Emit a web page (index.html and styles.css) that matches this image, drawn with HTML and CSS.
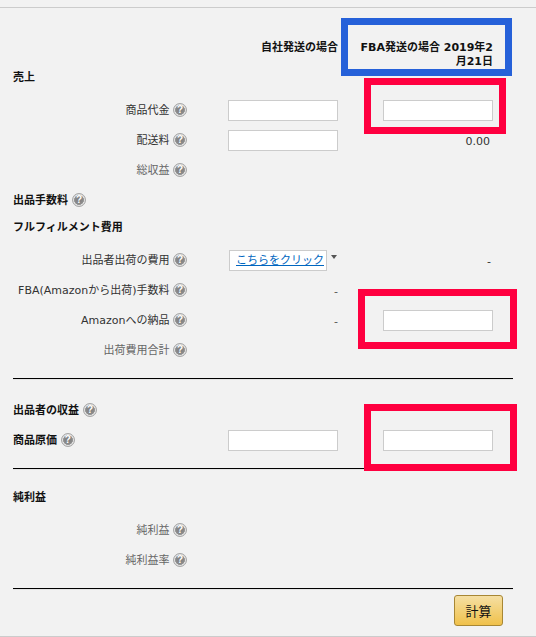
FILE: index.html
```html
<!DOCTYPE html>
<html lang="ja">
<head>
    <meta charset="UTF-8">
    <meta name="viewport" content="width=device-width, initial-scale=1.0">
    <title>料金シミュレーター</title>
    <link rel="stylesheet" href="styles.css">
</head>

<body>
    <form class="calc" action="#" method="post">
        <div class="head">
            <div class="label"></div>
            <div class="cell col2">自社発送の場合</div>
            <div class="cell col3 fba">FBA発送の場合 2019年2月21日</div>
        </div>

        <h3 class="title first">売上</h3>
        <div class="row">
            <div class="label">商品代金 <i class="help"></i></div>
            <div class="cell col2"><input type="text"></div>
            <div class="cell col3"><input type="text"></div>
        </div>
        <div class="row">
            <div class="label">配送料 <i class="help"></i></div>
            <div class="cell col2"><input type="text"></div>
            <div class="cell col3 value">0.00</div>
        </div>
        <div class="row muted">
            <div class="label">総収益 <i class="help"></i></div>
        </div>

        <h3 class="title fee">出品手数料 <i class="help"></i></h3>
        <h3 class="title sub">フルフィルメント費用</h3>

        <div class="row">
            <div class="label">出品者出荷の費用 <i class="help"></i></div>
            <div class="cell col2 pick">
                <span class="pick-box"><a href="#">こちらをクリック</a></span>
                <span class="caret"></span>
            </div>
            <div class="cell col3 value">-</div>
        </div>
        <div class="row">
            <div class="label">FBA(Amazonから出荷)手数料 <i class="help"></i></div>
            <div class="cell col2 value dash">-</div>
        </div>
        <div class="row">
            <div class="label">Amazonへの納品 <i class="help"></i></div>
            <div class="cell col2 value dash">-</div>
            <div class="cell col3"><input type="text"></div>
        </div>
        <div class="row muted">
            <div class="label">出荷費用合計 <i class="help"></i></div>
        </div>

        <hr>

        <h3 class="title income">出品者の収益 <i class="help"></i></h3>
        <div class="row">
            <div class="label left">商品原価 <i class="help"></i></div>
            <div class="cell col2"><input type="text"></div>
            <div class="cell col3"><input type="text"></div>
        </div>

        <hr>

        <h3 class="title net">純利益</h3>
        <div class="row muted">
            <div class="label">純利益 <i class="help"></i></div>
        </div>
        <div class="row muted">
            <div class="label">純利益率 <i class="help"></i></div>
        </div>

        <hr>

        <div class="actions">
            <button type="button" class="btn">計算</button>
        </div>

        <!-- 注釈の枠 -->
        <div class="mark blue"></div>
        <div class="mark red red1"></div>
        <div class="mark red red2"></div>
        <div class="mark red red3"></div>
    </form>
</body>
</html>
```

FILE: styles.css
```css
html, body {
    margin: 0;
    background-color: #f2f2f2;
}

body {
    padding-top: 7px;
    color: #333;
    font-family: "DejaVu Sans", "Noto Sans CJK JP", sans-serif;
    font-size: 11px;
    line-height: 14px;
}

.calc {
    position: relative;
    height: 628px;
    padding: 0 23px 0 13px;
    border-top: 1px solid #ccc;
    border-bottom: 1px solid #ccc;
}

.head {
    display: flex;
    height: 27px;
    padding-top: 33px;
    color: #111;
    font-weight: bold;
}

.row {
    display: flex;
    align-items: center;
    height: 30px;
}

.label {
    flex: none;
    box-sizing: border-box;
    width: 174px;
    padding-top: 2px;
    text-align: right;
}

.label.left {
    color: #111;
    font-weight: bold;
    text-align: left;
}

.cell {
    flex: none;
    width: 110px;
    text-align: right;
}

.col2 {
    margin-left: 41px;
}

.col3 {
    margin-left: 45px;
}

.fba {
    width: 135px;
    margin-left: 20px;
}

.muted {
    color: #666;
}

.value {
    box-sizing: border-box;
    padding: 4px 3px 0 0;
}

.dash {
    padding-right: 0;
    color: #555;
}

.title {
    display: flex;
    align-items: center;
    gap: 4px;
    box-sizing: border-box;
    margin: 0;
    padding-top: 2px;
    color: #111;
    font-size: 11px;
    font-weight: bold;
}

.first {
    height: 18px;
    margin-bottom: 9px;
}

.fee {
    height: 30px;
}

.sub {
    height: 24px;
    margin-bottom: 6px;
}

.income {
    height: 30px;
    margin-top: 15px;
}

.net {
    height: 30px;
    margin-top: 12px;
    margin-bottom: 3px;
}

.help {
    display: inline-block;
    box-sizing: border-box;
    width: 14px;
    height: 14px;
    margin-top: -2px;
    border: 1px solid #a6a6a6;
    border-radius: 50%;
    background: radial-gradient(circle, #7c7c7c 0, #8c8c8c 4.2px, #9a9a9a 4.7px, #ececec 5.2px, #d8d8d8 6px);
    color: #fff;
    font-family: "Liberation Sans", sans-serif;
    font-size: 10px;
    font-style: normal;
    font-weight: bold;
    line-height: 12px;
    text-align: center;
    vertical-align: 1px;
}

.help::before {
    content: "?";
}

input[type="text"] {
    display: block;
    box-sizing: border-box;
    width: 110px;
    height: 21px;
    padding: 0 4px;
    border: 1px solid #ccc;
    background-color: #fff;
}

.pick {
    display: flex;
    align-items: flex-start;
    gap: 4px;
    height: 21px;
    margin-left: 42px;
    text-align: left;
}

.pick-box {
    display: block;
    box-sizing: border-box;
    width: 98px;
    height: 21px;
    padding: 3px 0 0 6px;
    border: 1px solid #ccc;
    background-color: #fff;
    white-space: nowrap;
}

.pick-box a {
    color: #0066c0;
}

.caret {
    width: 0;
    height: 0;
    margin-top: 5px;
    border-top: 4px solid #555;
    border-left: 3.5px solid transparent;
    border-right: 3.5px solid transparent;
}

hr {
    height: 1px;
    margin: 13px 0 0;
    border: none;
    border-bottom: 1px solid #e4e4e4;
    background-color: #000;
}

.actions {
    display: flex;
    justify-content: flex-end;
    margin: 5px 10px 0 0;
}

.btn {
    box-sizing: border-box;
    width: 49px;
    height: 31px;
    padding: 0;
    border: 1px solid #a88734;
    border-radius: 3px;
    background: linear-gradient(#f5dfa3, #f0c14b);
    color: #111;
    font-family: inherit;
    font-size: 13px;
}

.mark {
    position: absolute;
    box-sizing: border-box;
    border: 7px solid;
}

.blue {
    left: 341px;
    top: 10px;
    width: 171px;
    height: 58px;
    border-color: #2661d9;
}

.red {
    border-color: #ff0040;
}

.red1 {
    left: 364px;
    top: 70px;
    width: 142px;
    height: 56px;
}

.red2 {
    left: 358px;
    top: 281px;
    width: 159px;
    height: 60px;
}

.red3 {
    left: 364px;
    top: 396px;
    width: 153px;
    height: 67px;
}
```
